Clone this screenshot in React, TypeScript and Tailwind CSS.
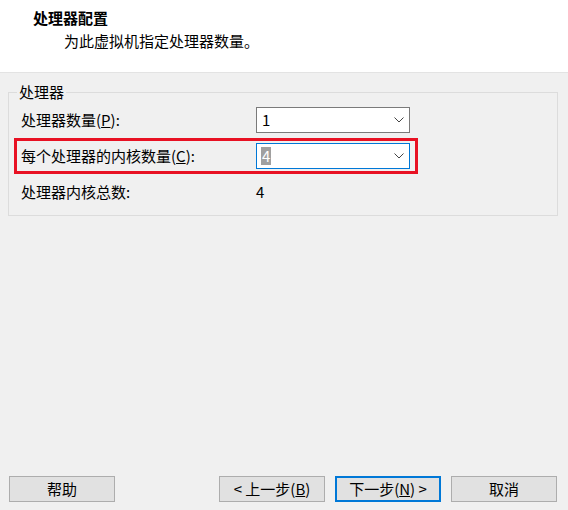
import { ReactNode } from 'react';

const font = "font-['Noto_Sans_CJK_SC','Noto_Sans',sans-serif]";

function Chevron() {
  return (
    <svg width="10" height="6" viewBox="0 0 10 6" className="shrink-0">
      <path d="M0.5 0.5 L5 5 L9.5 0.5" fill="none" stroke="#444" strokeWidth="1" />
    </svg>
  );
}

function Combo({ value, focused }: { value: string; focused?: boolean }) {
  return (
    <div
      className={`flex items-center justify-between w-[154px] h-[26px] bg-white border pl-[4px] pr-[5px] ${
        focused ? 'border-[#0078d7]' : 'border-[#7a7a7a]'
      }`}
    >
      {focused ? (
        <span className="bg-[#a0a0a0] text-white leading-[18px] px-[1px]">{value}</span>
      ) : (
        <span className="text-black leading-[18px] pl-[1px]">{value}</span>
      )}
      <Chevron />
    </div>
  );
}

function Row({ label, children, marked }: { label: ReactNode; children: ReactNode; marked?: boolean }) {
  return (
    <div
      className={`flex items-center h-[36px] w-[404px] ml-[5px] pl-[4px] border-[3px] ${
        marked ? 'border-[#e81123]' : 'border-transparent'
      }`}
    >
      <div className="w-[235px] text-black">{label}</div>
      {children}
    </div>
  );
}

function Button({ children, primary }: { children: ReactNode; primary?: boolean }) {
  return (
    <button
      className={`w-[106px] h-[26px] flex items-center justify-center bg-[#e1e1e1] text-black ${
        primary ? 'border-2 border-[#0078d7]' : 'border border-[#adadad]'
      }`}
    >
      {children}
    </button>
  );
}

export default function App() {
  return (
    <div className={`w-[568px] h-[510px] flex flex-col bg-[#f0f0f0] text-[15px] ${font}`}>
      {/* Header */}
      <div className="h-[73px] bg-white border-b border-[#e3e3e3] pl-[33px] pt-[8px] shrink-0">
        <h1 className="font-bold text-black leading-[20px]">处理器配置</h1>
        <p className="pl-[31px] mt-[3px] text-black leading-[20px]">为此虚拟机指定处理器数量。</p>
      </div>

      {/* Group box */}
      <fieldset className="mt-[9px] ml-[8px] w-[550px] border border-[#dcdcdc] pb-[5px]">
        <legend className="ml-[8px] px-[2px] leading-[20px] text-black">处理器</legend>
        <Row label={<>处理器数量(<span className="underline">P</span>):</>}>
          <Combo value="1" />
        </Row>
        <Row marked label={<>每个处理器的内核数量(<span className="underline">C</span>):</>}>
          <Combo value="4" focused />
        </Row>
        <Row label="处理器内核总数:">
          <span className="text-black">4</span>
        </Row>
      </fieldset>

      {/* Footer buttons */}
      <div className="mt-auto flex items-center justify-between pl-[9px] pr-[11px] pb-[8px]">
        <Button>帮助</Button>
        <div className="flex gap-[10px]">
          <Button>
            &lt; 上一步(<span className="underline">B</span>)
          </Button>
          <Button primary>
            下一步(<span className="underline">N</span>) &gt;
          </Button>
          <Button>取消</Button>
        </div>
      </div>
    </div>
  );
}
